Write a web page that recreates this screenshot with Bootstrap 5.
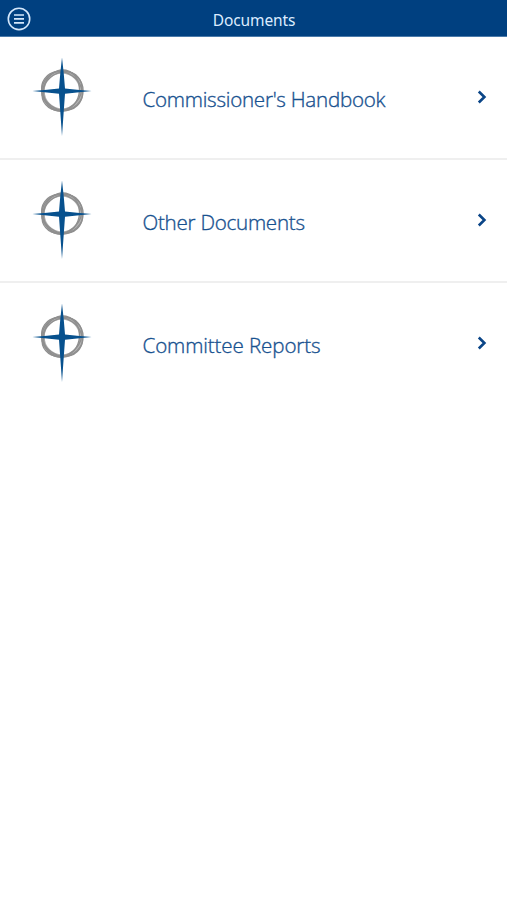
<!DOCTYPE html>
<html lang="en">
<head>
<meta charset="utf-8">
<meta name="viewport" content="width=device-width, initial-scale=1">
<title>Documents</title>
<link href="https://cdn.jsdelivr.net/npm/bootstrap@5.3.0/dist/css/bootstrap.min.css" rel="stylesheet">
<style>
body { font-family: "Noto Sans", "Open Sans", sans-serif; background: #fff; }
.app-bar { display: grid; grid-template-columns: 38px 1fr 38px; height: 37px; background: #004080; color: #dcecff; border-bottom: 1px solid #4a7aaa; }
.app-bar h1 { font-size: 15.5px; line-height: 36px; letter-spacing: -.1px; padding: 2px 0 0 1px; }
.menu-btn { width: 38px; height: 36px; }
.doc-row { height: 123px; color: #17518f; border-bottom: 2px solid #efefef; }
.doc-row:last-child { border-bottom: 0; }
.doc-name { font-family: "Open Sans", "Noto Sans", sans-serif; font-weight: 300; font-size: 20.6px; line-height: 28px; letter-spacing: -.26px; margin: 48px 0 0 50.5px; -webkit-text-stroke: .35px #17518f; }
.doc-name.reports { letter-spacing: -.12px; }
.emblem { margin: 20px 0 0 32px; }
.chevron { margin: 52px 19px 0 auto; }
</style>
<script src="https://cdn.jsdelivr.net/npm/bootstrap@5.3.0/dist/js/bootstrap.bundle.min.js"></script>
</head>
<body>
<svg class="d-none" aria-hidden="true">
  <symbol id="compass" viewBox="0 0 60 80">
    <circle cx="30" cy="34" r="19.1" fill="none" stroke="#b4b4b4" stroke-width="3.6"/>
    <g fill="none" stroke="#8f8f8f" stroke-width="1.3">
      <ellipse cx="30" cy="34" rx="21.3" ry="18.4" transform="rotate(35 30 34)"/>
      <ellipse cx="30" cy="34" rx="21.3" ry="17.8" transform="rotate(-40 30 34)"/>
      <ellipse cx="30.5" cy="33.7" rx="20.6" ry="19.8"/>
      <ellipse cx="29.5" cy="33.7" rx="17.8" ry="20.8" transform="rotate(12 30 34)"/>
    </g>
    <path fill="#07518e" d="M30 .5 L31.7 16 L33 31.5 L45 32.8 L59.5 34 L45 35.4 L33 36.7 L31.9 52 L30 79 L28.1 52 L27 36.7 L15 35.4 L.5 34 L15 32.8 L27 31.5 L28.3 16 Z"/>
  </symbol>
  <symbol id="chevron" viewBox="0 0 12 16">
    <path d="M2.8 2.5 L8.4 8 L2.8 13.5" fill="none" stroke="#0a4587" stroke-width="2.6"/>
  </symbol>
</svg>
<header class="app-bar">
  <button class="menu-btn btn p-0 border-0 d-flex align-items-center justify-content-center" aria-label="Menu">
    <svg width="26" height="26" viewBox="0 0 26 26" fill="none" stroke="#d4e7fb">
      <circle cx="13" cy="13.9" r="10.7" stroke-width="1.6"/>
      <path d="M8 10H18M8 13.9H18M8 17.8H18" stroke-width="1.7"/>
    </svg>
  </button>
  <h1 class="m-0 fw-normal text-center">Documents</h1>
</header>
<main>
  <a class="doc-row d-flex align-items-start text-decoration-none" href="#">
    <svg class="emblem flex-shrink-0" width="60" height="80"><use href="#compass"/></svg>
    <div class="doc-name text-nowrap">Commissioner's Handbook</div>
    <svg class="chevron flex-shrink-0" width="12" height="16"><use href="#chevron"/></svg>
  </a>
  <a class="doc-row d-flex align-items-start text-decoration-none" href="#">
    <svg class="emblem flex-shrink-0" width="60" height="80"><use href="#compass"/></svg>
    <div class="doc-name text-nowrap">Other Documents</div>
    <svg class="chevron flex-shrink-0" width="12" height="16"><use href="#chevron"/></svg>
  </a>
  <a class="doc-row d-flex align-items-start text-decoration-none" href="#">
    <svg class="emblem flex-shrink-0" width="60" height="80"><use href="#compass"/></svg>
    <div class="doc-name reports text-nowrap">Committee Reports</div>
    <svg class="chevron flex-shrink-0" width="12" height="16"><use href="#chevron"/></svg>
  </a>
</main>
</body>
</html>
